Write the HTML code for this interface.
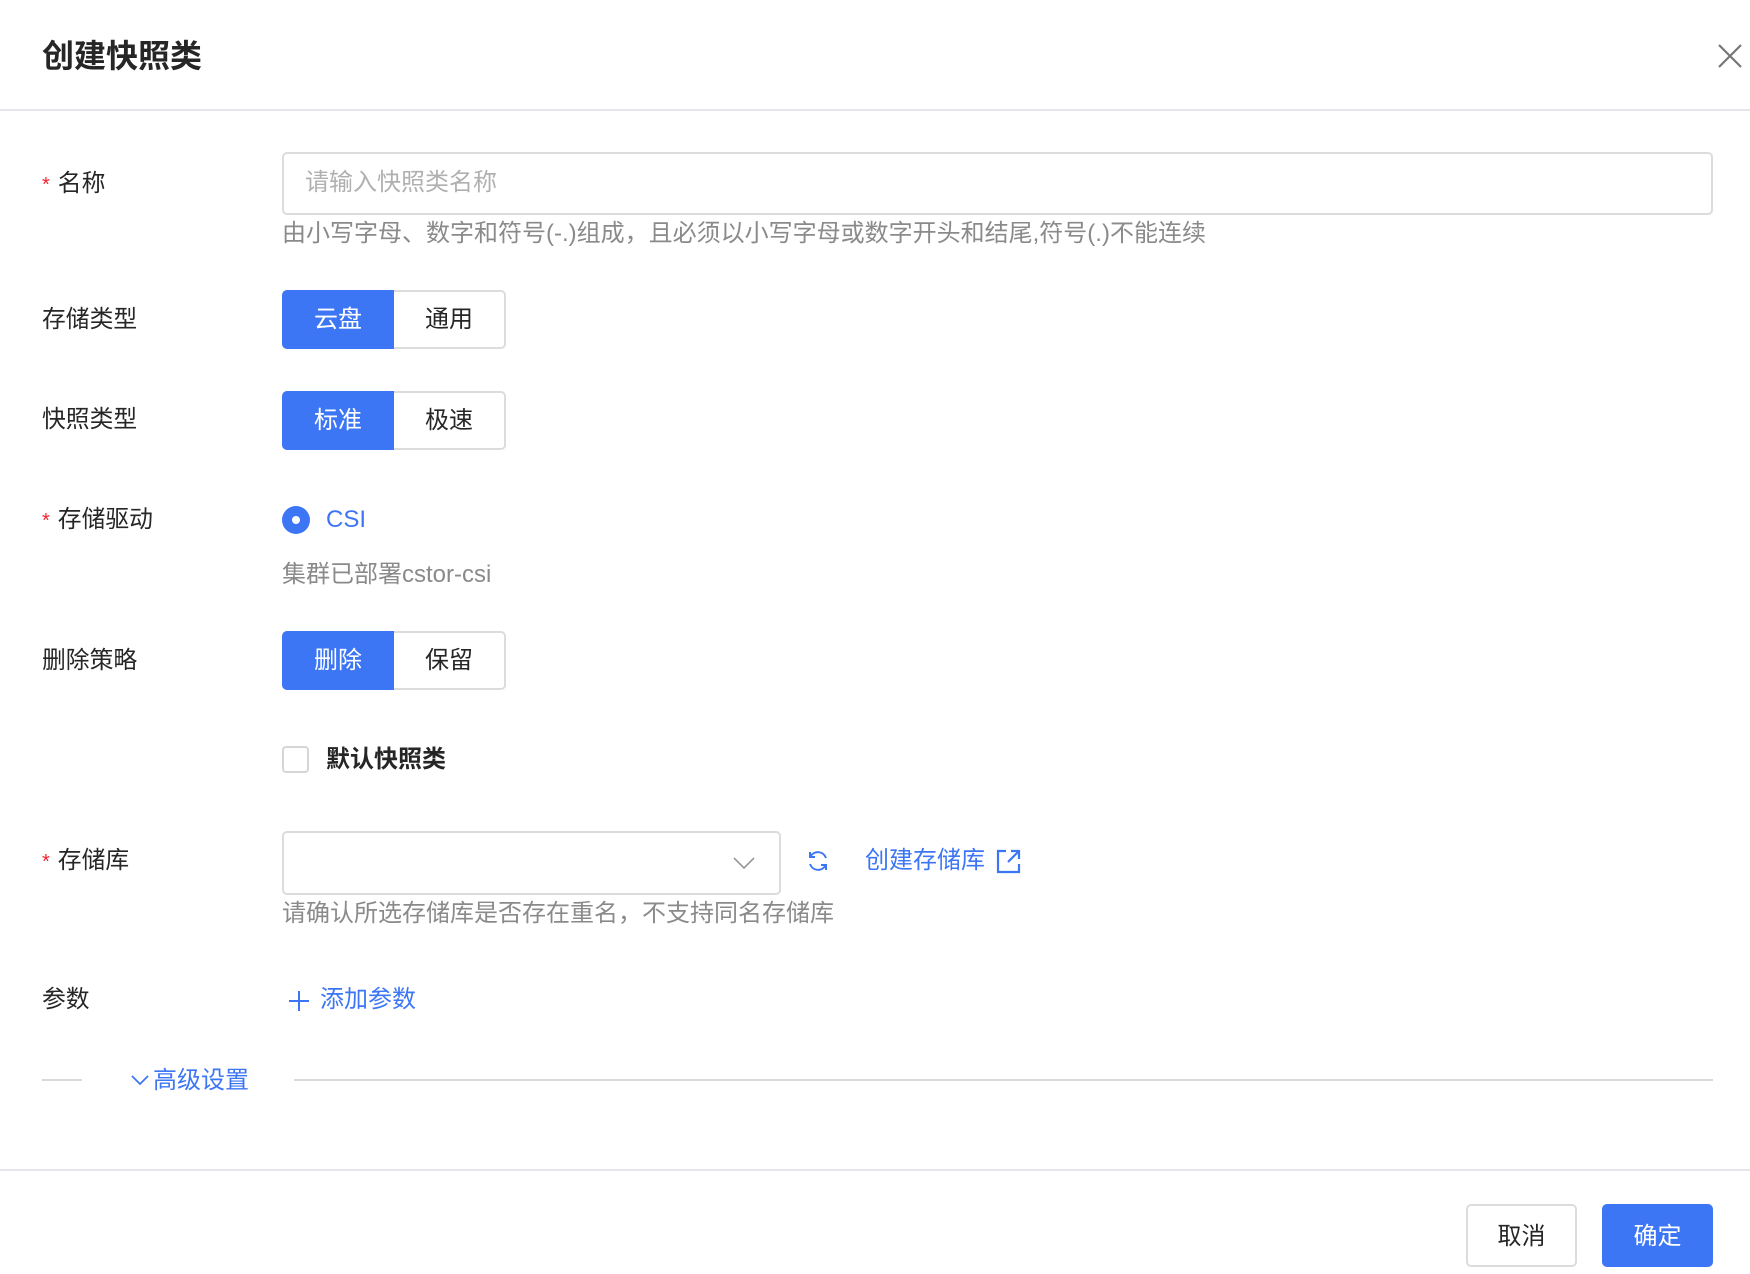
<!DOCTYPE html>
<html><head><meta charset="utf-8"><style>
*{box-sizing:border-box;margin:0;padding:0}
body{width:1750px;height:1274px;background:#fff;position:relative;overflow:hidden;font-family:"Liberation Sans","Noto Sans CJK SC",sans-serif;color:#262626}
.a{position:absolute;white-space:nowrap}
.lbl{font-size:23.8px;line-height:30px;left:42px}
.req{color:#f5222d;font-size:20px;margin-right:8px}
.hint{font-size:24px;color:#8a8a8a;line-height:30px;left:282px}
.seg{position:absolute;left:282px;width:224px;height:59px;display:flex}
.seg div{width:112px;height:59px;font-size:24px;line-height:1;display:flex;align-items:center;justify-content:center}
.seg .on{background:#3d76f4;color:#fff;border-radius:5px 0 0 5px}
.seg .off{border:2px solid #dcdcdc;border-left:none;border-radius:0 5px 5px 0}
.blue{color:#3d76f4}
</style></head><body>
<div class="a" style="left:42px;top:36px;font-size:32px;font-weight:bold;line-height:40px;color:#262626">创建快照类</div>
<svg class="a" style="left:1717px;top:43px" width="26" height="26" viewBox="0 0 26 26"><path d="M2 2L24 24M24 2L2 24" stroke="#777" stroke-width="2.2" fill="none"/></svg>
<div class="a" style="left:0;top:109px;width:1750px;height:2px;background:#e4e6ec"></div>

<div class="a lbl" style="top:169px"><span class="req">*</span>名称</div>
<div class="a" style="left:282px;top:152px;width:1431px;height:63px;border:2px solid #dcdcdc;border-radius:5px"></div>
<div class="a" style="left:305px;top:168px;font-size:24px;color:#b0b0b0;line-height:30px">请输入快照类名称</div>
<div class="a hint" style="top:219px">由小写字母、数字和符号(-.)组成，且必须以小写字母或数字开头和结尾,符号(.)不能连续</div>

<div class="a lbl" style="top:305px">存储类型</div>
<div class="seg" style="top:290px"><div class="on">云盘</div><div class="off">通用</div></div>

<div class="a lbl" style="top:405px">快照类型</div>
<div class="seg" style="top:391px"><div class="on">标准</div><div class="off">极速</div></div>

<div class="a lbl" style="top:505px"><span class="req">*</span>存储驱动</div>
<div class="a" style="left:282px;top:506px;width:28px;height:28px;border-radius:50%;background:#3d76f4"></div>
<div class="a" style="left:292px;top:516px;width:8px;height:8px;border-radius:50%;background:#fff"></div>
<div class="a blue" style="left:326px;top:505px;font-size:24px;line-height:30px">CSI</div>
<div class="a hint" style="top:560px">集群已部署cstor-csi</div>

<div class="a lbl" style="top:646px">删除策略</div>
<div class="seg" style="top:631px"><div class="on">删除</div><div class="off">保留</div></div>

<div class="a" style="left:282px;top:746px;width:27px;height:27px;border:2px solid #d6d6d6;border-radius:4px"></div>
<div class="a" style="left:326px;top:745px;font-size:24px;line-height:30px;font-weight:bold">默认快照类</div>

<div class="a lbl" style="top:846px"><span class="req">*</span>存储库</div>
<div class="a" style="left:282px;top:831px;width:499px;height:64px;border:2px solid #dcdcdc;border-radius:5px"></div>
<svg class="a" style="left:733px;top:856px" width="22" height="14" viewBox="0 0 22 14"><path d="M1 2L11 12L21 2" stroke="#999" stroke-width="1.6" fill="none"/></svg>
<svg class="a" style="left:806px;top:849px" width="24" height="24" viewBox="0 0 24 24" fill="none" stroke="#3d76f4" stroke-width="2"><path d="M20 9A8.5 8.5 0 0 0 4.5 7.5M4 15A8.5 8.5 0 0 0 19.5 16.5"/><path d="M4 3V8H9M20 21V16H15"/></svg>
<div class="a blue" style="left:865px;top:846px;font-size:24px;line-height:30px">创建存储库</div>
<svg class="a" style="left:996px;top:849px" width="25" height="25" viewBox="0 0 25 25" fill="none" stroke="#3d76f4" stroke-width="2.2"><path d="M10 2H2V23H23V15"/><path d="M12 13L23 2M15 2H23V10"/></svg>
<div class="a hint" style="top:899px">请确认所选存储库是否存在重名，不支持同名存储库</div>

<div class="a lbl" style="top:985px">参数</div>
<svg class="a" style="left:288px;top:990px" width="22" height="22" viewBox="0 0 22 22"><path d="M11 1V21M1 11H21" stroke="#3d76f4" stroke-width="2"/></svg>
<div class="a blue" style="left:320px;top:985px;font-size:24px;line-height:30px">添加参数</div>

<div class="a" style="left:42px;top:1079px;width:40px;height:2px;background:#d9d9d9"></div>
<svg class="a" style="left:131px;top:1075px" width="18" height="11" viewBox="0 0 18 11"><path d="M1 1L9 9L17 1" stroke="#3d76f4" stroke-width="1.8" fill="none"/></svg>
<div class="a blue" style="left:153px;top:1066px;font-size:24px;line-height:30px">高级设置</div>
<div class="a" style="left:294px;top:1079px;width:1419px;height:2px;background:#d9d9d9"></div>

<div class="a" style="left:0;top:1169px;width:1750px;height:2px;background:#e4e6ec"></div>
<div class="a" style="left:1466px;top:1204px;width:111px;height:63px;border:2px solid #dcdcdc;border-radius:5px;font-size:24px;display:flex;align-items:center;justify-content:center;padding-bottom:5px">取消</div>
<div class="a" style="left:1602px;top:1204px;width:111px;height:63px;background:#3d76f4;color:#fff;border-radius:5px;font-size:24px;display:flex;align-items:center;justify-content:center;padding-bottom:5px">确定</div>
</body></html>
